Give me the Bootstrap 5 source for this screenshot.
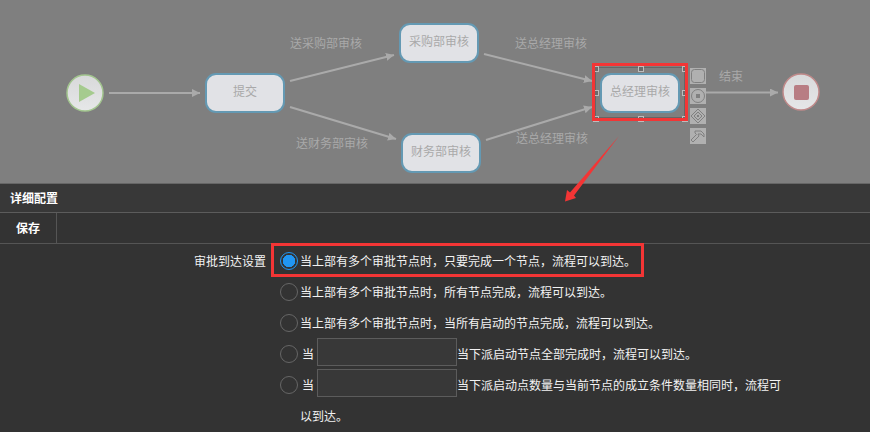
<!DOCTYPE html>
<html lang="en">
<head>
    <meta charset="UTF-8">
    <meta name="viewport" content="width=device-width, initial-scale=1.0">
    <title>详细配置</title>
    <link href="https://cdn.jsdelivr.net/npm/bootstrap@5.3.0/dist/css/bootstrap.min.css" rel="stylesheet">
    <style>
        html, body { height: 432px; overflow: hidden; }
        body { background: #333; color: #f2f2f2; font: 12px/1.5 "Noto Sans CJK SC", "Liberation Sans", sans-serif; }
        .page-wrap { width: 870px; height: 432px; overflow: hidden; }
        .flow-canvas { height: 183px; background: #7f7f7f; }
        .flow-canvas svg, .note-layer { display: block; }
        .flow-canvas text { font-family: "Noto Sans CJK SC", "Liberation Sans", sans-serif; font-size: 12px; fill: #a9a9a9; }
        .flow-node { fill: #e1e2e6; stroke: #6499b3; stroke-width: 2; }
        .flow-line { stroke: #aaa; stroke-width: 2; fill: none; }
        .grip { fill: #6a6a6a; stroke: #bdbdbd; stroke-width: 1; }
        .tile { fill: #b0b0b0; }
        .tile-line { fill: none; stroke: #808080; stroke-width: 1; }
        .panel-title { height: 30px; padding-left: 10px; background: #383838; border-top: 1px solid #666; border-bottom: 1px solid #5c5c5c; font-weight: 700; color: #fff; }
        .tool-bar { height: 31px; border-bottom: 1px solid #555; }
        .save-cell { width: 57px; height: 100%; border-right: 1px solid #555; font-weight: 700; color: #fff; }
        .form-area { line-height: 31px; padding-top: 1px; }
        .field-label { width: 266px; text-align: right; flex: none; }
        .option-list { width: 540px; padding-left: 14px; }
        .option-row { min-height: 31px; }
        .option-text { padding-left: 2px; width: 500px; }
        .option-text.lead-in { text-indent: 2px; }
        .round-pick.form-check-input { width: 18px; height: 18px; margin: 7px 0 0; flex: none; background: transparent; border: 1px solid #666; box-shadow: none; }
        .round-pick.form-check-input:checked { background: radial-gradient(circle, #2196f3 0 6px, transparent 6.5px); border-color: #2196f3; }
        .count-box.form-control { display: inline-block; vertical-align: top; width: 140px; height: 28px; margin: 0 0 0 3px; padding: 0 6px; background: #383838; border: 1px solid #5c5c5c; border-radius: 0; text-indent: 0; }
        .note-layer { position: absolute; left: 0; top: 0; pointer-events: none; }
    </style>
</head>
<body>
    <div class="page-wrap position-relative">
        <div class="flow-canvas">
            <svg width="870" height="183" viewBox="0 0 870 183">
                <defs>
                    <marker id="arrowHead" markerUnits="userSpaceOnUse" markerWidth="9" markerHeight="9" refX="8" refY="4" orient="auto">
                        <path d="M0 0L8 4L0 8Z" fill="#aaa"/>
                    </marker>
                    <linearGradient id="bulbFill" x1="0" y1="0" x2="0" y2="1">
                        <stop offset="0" stop-color="#d8d9da"/>
                        <stop offset="1" stop-color="#e6e7e8"/>
                    </linearGradient>
                </defs>

                <!-- start -->
                <circle cx="85" cy="93" r="18" fill="url(#bulbFill)" stroke="#a3c68f" stroke-width="1.5"/>
                <path d="M79 84L95 93L79 102Z" fill="#a5cb8e"/>

                <!-- connectors -->
                <path class="flow-line" d="M109 93H200" marker-end="url(#arrowHead)"/>
                <path class="flow-line" d="M290 81L394 55" marker-end="url(#arrowHead)"/>
                <path class="flow-line" d="M290 107L396 139" marker-end="url(#arrowHead)"/>
                <path class="flow-line" d="M484 54L592 81" marker-end="url(#arrowHead)"/>
                <path class="flow-line" d="M486 140L592 107" marker-end="url(#arrowHead)"/>
                <path class="flow-line" d="M706 92.500H778" marker-end="url(#arrowHead)"/>

                <!-- nodes -->
                <rect class="flow-node" x="206" y="74" width="78" height="38" rx="10"/>
                <text x="245" y="96" text-anchor="middle">提交</text>
                <rect class="flow-node" x="400" y="24" width="78" height="38" rx="10"/>
                <text x="439" y="46" text-anchor="middle">采购部审核</text>
                <rect class="flow-node" x="402" y="134" width="78" height="38" rx="10"/>
                <text x="441" y="156" text-anchor="middle">财务部审核</text>
                <rect class="flow-node" x="601" y="74" width="78" height="38" rx="10"/>
                <text x="640" y="96" text-anchor="middle">总经理审核</text>

                <!-- edge labels -->
                <text x="290" y="48">送采购部审核</text>
                <text x="296" y="148">送财务部审核</text>
                <text x="515" y="48">送总经理审核</text>
                <text x="516" y="143">送总经理审核</text>
                <text x="719" y="81">结束</text>

                <!-- selection frame -->
                <rect x="595.500" y="67.500" width="89" height="50" fill="none" stroke="#666"/>
                <rect class="grip" x="593.500" y="66.500" width="5" height="5"/>
                <rect class="grip" x="638.500" y="66.500" width="5" height="5"/>
                <rect class="grip" x="682.500" y="66.500" width="5" height="5"/>
                <rect class="grip" x="593.500" y="90.500" width="5" height="5"/>
                <rect class="grip" x="682.500" y="90.500" width="5" height="5"/>
                <rect class="grip" x="593.500" y="116.500" width="5" height="5"/>
                <rect class="grip" x="638.500" y="116.500" width="5" height="5"/>
                <rect class="grip" x="682.500" y="116.500" width="5" height="5"/>

                <!-- node tools -->
                <rect class="tile" x="690" y="68" width="16" height="16"/>
                <rect class="tile-line" x="691.500" y="69.500" width="13" height="13" rx="3"/>
                <rect class="tile" x="690" y="88" width="16" height="16"/>
                <circle class="tile-line" cx="698" cy="96" r="6.500"/>
                <rect x="696" y="94" width="4" height="4" fill="#808080"/>
                <rect class="tile" x="690" y="108" width="16" height="16"/>
                <path class="tile-line" d="M698 109L705 116L698 123L691 116Z"/>
                <path class="tile-line" d="M698 112L702 116L698 120L694 116Z"/>
                <rect x="697" y="115" width="2" height="2" fill="#808080"/>
                <rect class="tile" x="690" y="128" width="16" height="16"/>
                <path class="tile-line" d="M695 131H701L704 134V137L701 134L698 134L699 136L693 142L691 140L696.500 134.500L695 133Z"/>

                <!-- end -->
                <circle cx="801" cy="92" r="18" fill="url(#bulbFill)" stroke="#c08a8a" stroke-width="1.5"/>
                <rect x="794" y="85" width="15" height="15" rx="2" fill="#b87d83"/>
            </svg>
        </div>

        <div class="panel-title d-flex align-items-center">详细配置</div>
        <div class="tool-bar d-flex align-items-center">
            <div class="save-cell d-flex align-items-center justify-content-center">保存</div>
        </div>

        <div class="form-area d-flex">
            <div class="field-label">审批到达设置</div>
            <div class="option-list">
                <div class="option-row d-flex">
                    <input class="round-pick form-check-input" type="radio" name="arrive" checked>
                    <div class="option-text">当上部有多个审批节点时，只要完成一个节点，流程可以到达。</div>
                </div>
                <div class="option-row d-flex">
                    <input class="round-pick form-check-input" type="radio" name="arrive">
                    <div class="option-text">当上部有多个审批节点时，所有节点完成，流程可以到达。</div>
                </div>
                <div class="option-row d-flex">
                    <input class="round-pick form-check-input" type="radio" name="arrive">
                    <div class="option-text">当上部有多个审批节点时，当所有启动的节点完成，流程可以到达。</div>
                </div>
                <div class="option-row d-flex">
                    <input class="round-pick form-check-input" type="radio" name="arrive">
                    <div class="option-text lead-in">当<input class="count-box form-control" type="text">当下派启动节点全部完成时，流程可以到达。</div>
                </div>
                <div class="option-row d-flex">
                    <input class="round-pick form-check-input" type="radio" name="arrive">
                    <div class="option-text lead-in">当<input class="count-box form-control" type="text">当下派启动点数量与当前节点的成立条件数量相同时，流程可<br>以到达。</div>
                </div>
            </div>
        </div>

        <!-- red annotations -->
        <svg class="note-layer" width="870" height="432" viewBox="0 0 870 432">
            <rect x="593.500" y="64.500" width="93" height="55" fill="none" stroke="#f33535" stroke-width="3"/>
            <rect x="272.500" y="244.500" width="370" height="31" fill="none" stroke="#f33535" stroke-width="3"/>
            <path d="M619 136L570 192.500L567 190L565 201.500L576 198L574 195.500Z" fill="#f33535"/>
        </svg>
    </div>

    <script src="https://cdn.jsdelivr.net/npm/bootstrap@5.3.0/dist/js/bootstrap.bundle.min.js"></script>
</body>
</html>
